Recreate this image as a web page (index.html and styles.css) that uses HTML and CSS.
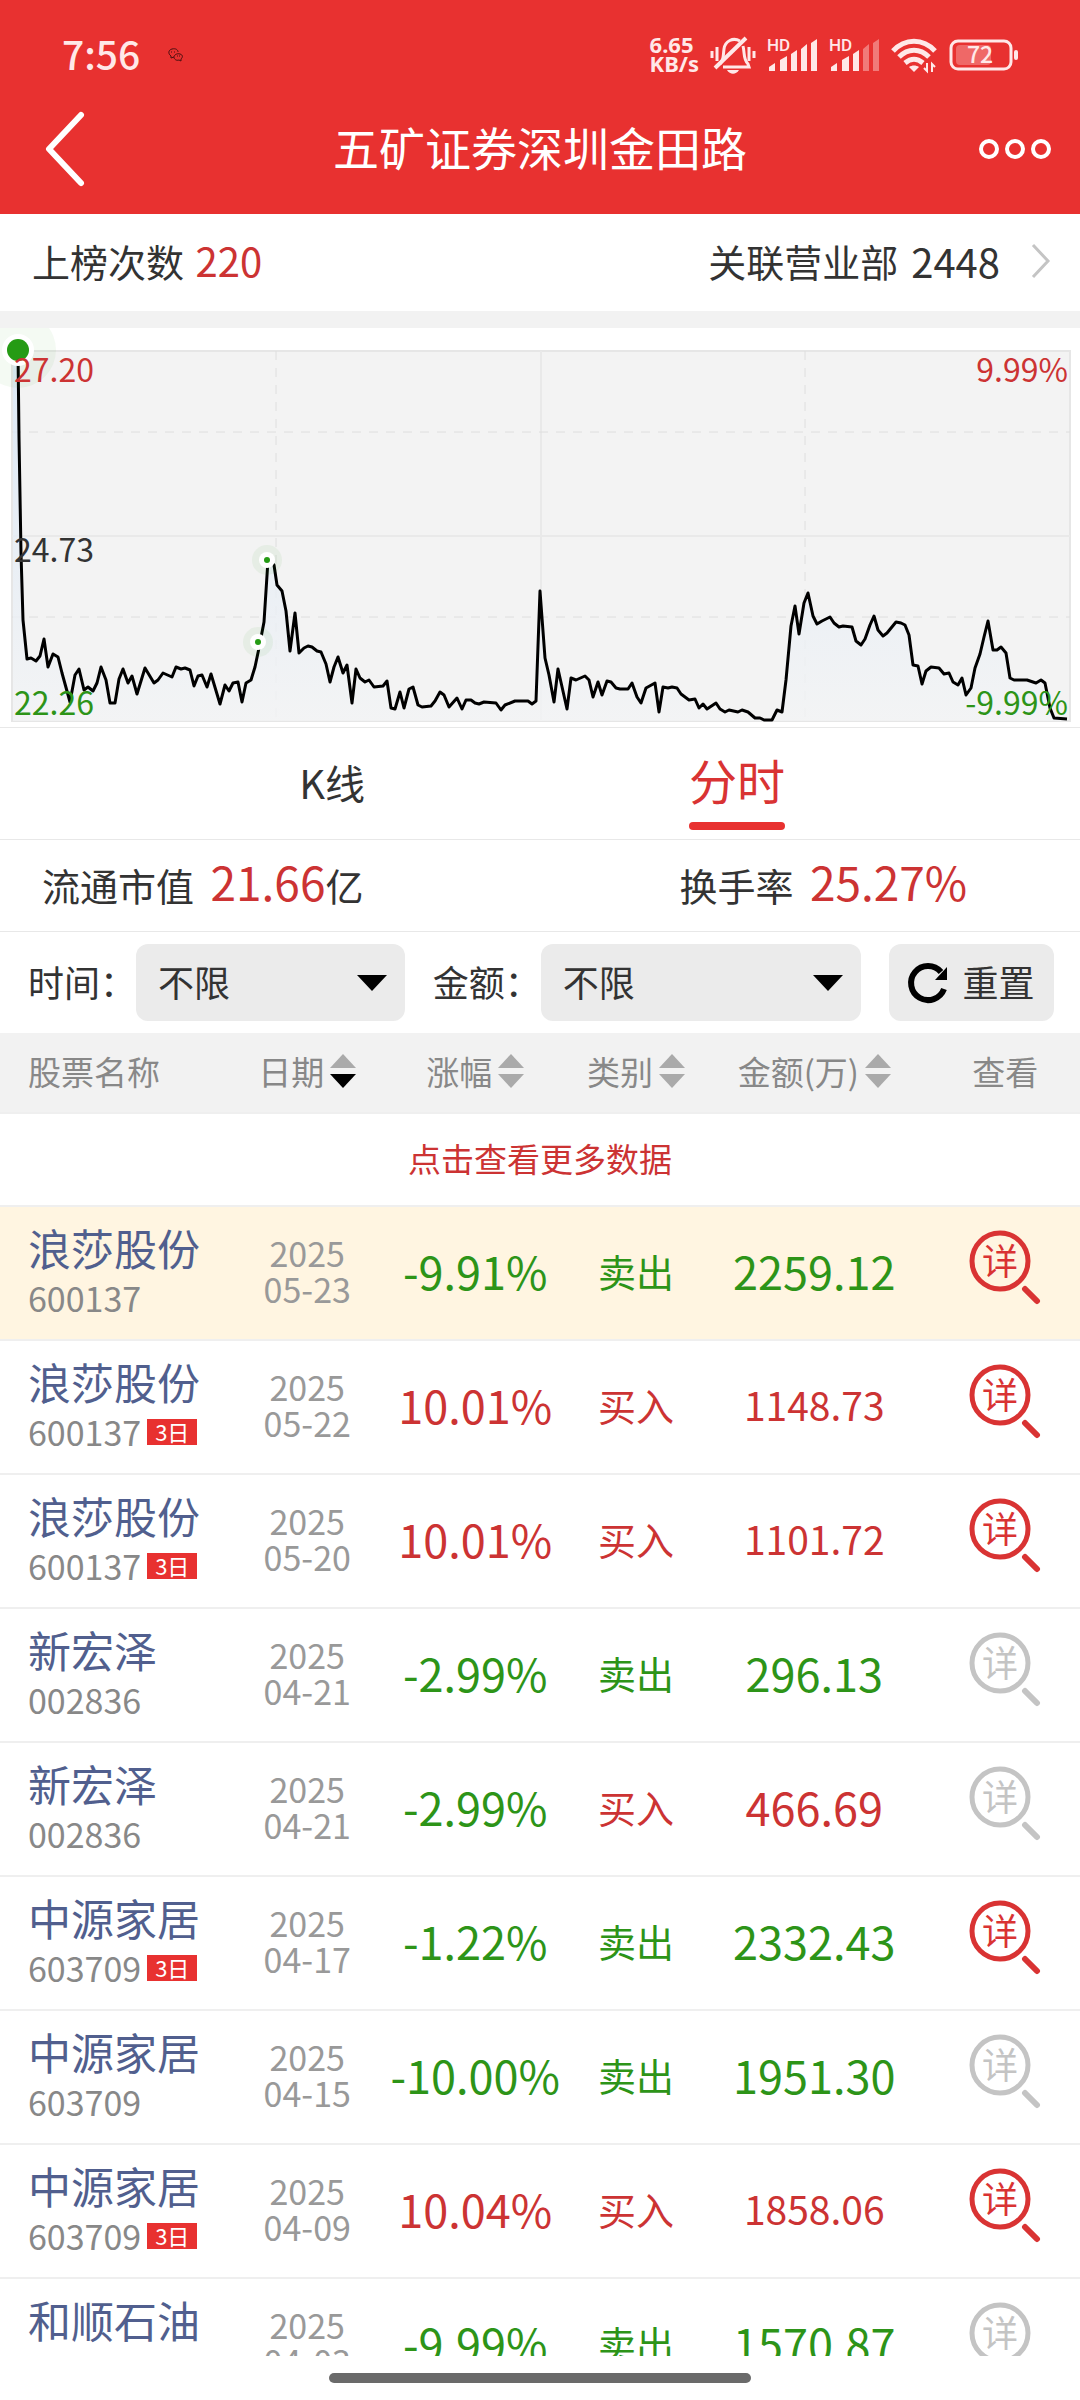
FILE: index.html
```html
<!DOCTYPE html>
<html lang="zh-CN">

<head>
    <meta charset="UTF-8">
    <meta name="viewport" content="width=device-width, initial-scale=1.0">
    <title>五矿证券深圳金田路</title>
    <link rel="stylesheet" href="styles.css">
</head>

<body>
    <!-- shared icons -->
    <svg class="defs" width="0" height="0">
        <symbol id="detail" viewBox="0 0 72 80">
            <circle cx="31" cy="31" r="28" fill="none" stroke="currentColor" stroke-width="5" />
            <path d="M56 59l12 12" stroke="currentColor" stroke-width="6" stroke-linecap="round" />
            <text x="31" y="45" font-size="36" text-anchor="middle" fill="currentColor">详</text>
        </symbol>
        <symbol id="sort" viewBox="0 0 26 36">
            <path class="up" d="M13 1l13 14H0z" />
            <path class="down" d="M13 35L0 21h26z" />
        </symbol>
    </svg>

    <div class="page">
        <header class="header">
            <div class="status">
                <span class="clock">7:56</span>
                <svg class="wechat" width="15" height="14" viewBox="0 0 15 14" fill="none" stroke="#4a1010">
                    <path d="M6 9l-3 1V8C0 6 0 2 4 1s6 1 6 3" />
                    <path d="M13 11v2l-2-1c-3 1-5-1-5-3s3-4 6-3 3 3 1 5z" />
                    <path d="M3 4h1M6 4h1M9 8h1M11 8h1" />
                </svg>
                <div class="status-right">
                    <div class="speed"><span>6.65</span><span>KB/s</span></div>
                    <svg width="44" height="38" viewBox="0 0 44 38" fill="none" stroke="currentColor" stroke-width="3">
                        <path d="M9 28c4-4 3-8 4-15 1-8 9-12 16-8M32 10c2 8 0 13 5 18l1 3H12" />
                        <path d="M4 32L35 2" stroke-width="4" />
                        <path d="M1 15v7M6 11v14M38 11v14M43 15v7" stroke-width="3" />
                        <path d="M16 34h12c-3 5-9 5-12 0z" fill="currentColor" stroke="none" />
                    </svg>
                    <svg width="50" height="34" viewBox="0 0 50 34" fill="currentColor">
                        <text class="hd" x="0" y="13">HD</text>
                        <path d="M2 33v-4l6-4v8zM13 33V22l7-4v15zM24 33V16l6-4v21zM34 33V11l6-5v27zM44 33V5l6-4v32z" />
                    </svg>
                    <svg width="50" height="34" viewBox="0 0 50 34" fill="currentColor">
                        <text class="hd" x="0" y="13">HD</text>
                        <path d="M2 33v-4l6-4v8zM13 33V22l7-4v15zM24 33V16l6-4v21z" />
                        <path d="M34 33V11l6-5v27zM44 33V5l6-4v32z" opacity=".4" />
                    </svg>
                    <svg width="46" height="36" viewBox="0 0 46 36" fill="none" stroke="currentColor" stroke-width="5">
                        <path d="M2 14c12-13 30-13 42 0M8 20c9-9 21-9 30 0M14 26c6-5 12-5 18 0" />
                        <path d="M18 30c3-2 7-2 10 0l-5 5z" fill="currentColor" stroke="none" />
                        <path d="M36 26v8l-3-3M41 35v-8l3 3" stroke-width="2" />
                    </svg>
                    <svg width="69" height="32" viewBox="0 0 69 32">
                        <rect x="2" y="2" width="60" height="28" rx="7" fill="none" stroke="currentColor" stroke-width="3" />
                        <rect x="7" y="6" width="35" height="20" rx="4" fill="currentColor" opacity=".3" />
                        <rect x="65" y="11" width="4" height="10" rx="2" fill="currentColor" />
                        <text class="level" x="31" y="24" text-anchor="middle" fill="currentColor">72</text>
                    </svg>
                </div>
            </div>
            <nav class="navbar">
                <button class="icon-btn back" aria-label="返回">
                    <svg width="40" height="76" viewBox="0 0 40 76" fill="none" stroke="currentColor" stroke-width="6" stroke-linecap="round" stroke-linejoin="round">
                        <path d="M36 4L4 38l32 34" />
                    </svg>
                </button>
                <h1>五矿证券深圳金田路</h1>
                <button class="icon-btn" aria-label="更多">
                    <svg width="74" height="22" viewBox="0 0 74 22" fill="none" stroke="currentColor" stroke-width="4">
                        <circle cx="11" cy="11" r="8" />
                        <circle cx="37" cy="11" r="8" />
                        <circle cx="63" cy="11" r="8" />
                    </svg>
                </button>
            </nav>
        </header>

        <div class="summary">
            <span>上榜次数 <span class="num red">220</span></span>
            <a href="#related">
                关联营业部 <span class="num">2448</span>
                <svg class="arrow" width="18" height="34" viewBox="0 0 18 34" fill="none" stroke="#c4c4c4" stroke-width="3">
                    <path d="M1 1l15 16L1 33" />
                </svg>
            </a>
        </div>

        <svg class="chart" viewBox="0 0 1080 399">
            <defs>
                <linearGradient id="fill" x1="0" y1="0" x2="0" y2="1">
                    <stop offset="0" stop-color="#d8e6f6" />
                    <stop offset="1" stop-color="#f3f4f5" />
                </linearGradient>
            </defs>
            <rect x="12" y="23" width="1058" height="370" fill="#f3f3f3" stroke="#e6e6e6" stroke-width="2" />
            <path class="grid" d="M12 208h1058M541 23v370" />
            <path class="grid dashed" d="M12 104h1058M12 289h1058M276 23v370M805 23v370" />
            <g id="series"></g>
            <circle cx="18" cy="22" r="38" fill="#259b14" opacity=".05" />
            <g fill="#259b14" opacity=".06">
                <circle cx="267" cy="232" r="15" />
                <circle cx="258" cy="314" r="15" />
            </g>
            <g fill="#fff">
                <circle cx="18" cy="22" r="16" />
                <circle cx="267" cy="232" r="8" />
                <circle cx="258" cy="314" r="8" />
            </g>
            <g fill="#259b14">
                <circle cx="18" cy="22" r="11" />
                <circle cx="267" cy="232" r="3" />
                <circle cx="258" cy="314" r="3" />
            </g>
            <g class="axis">
                <text class="red" x="14" y="54">27.20</text>
                <text x="14" y="234">24.73</text>
                <text class="green" x="14" y="387">22.26</text>
                <text class="red" x="1068" y="54" text-anchor="end">9.99%</text>
                <text class="green" x="1068" y="387" text-anchor="end">-9.99%</text>
            </g>
        </svg>

        <div class="tabs" role="tablist">
            <button role="tab" aria-selected="false">K线</button>
            <button role="tab" aria-selected="true" class="active"><span>分时</span></button>
        </div>

        <div class="stats">
            <span>流通市值 <span class="big red">21.66</span>亿</span>
            <span>换手率 <span class="big red">25.27%</span></span>
        </div>

        <div class="filters">
            <label for="time">时间：</label>
            <div class="select time">
                <select id="time">
                    <option>不限</option>
                </select>
            </div>
            <label class="second" for="amount">金额：</label>
            <div class="select amount">
                <select id="amount">
                    <option>不限</option>
                </select>
            </div>
            <button class="reset">
                <svg width="40" height="42" viewBox="0 0 40 42">
                    <path d="M36 27a17 17 0 1 1-3-17" fill="none" stroke="#000" stroke-width="6" />
                    <path d="M39 5v13H27z" />
                </svg>
                <span>重置</span>
            </button>
        </div>

        <main class="list">
            <table>
                <colgroup>
                    <col class="c-name">
                    <col class="c-date">
                    <col class="c-pct">
                    <col class="c-type">
                    <col class="c-amount">
                    <col class="c-view">
                </colgroup>
                <thead>
                    <tr>
                        <th class="name">股票名称</th>
                        <th><button class="desc">日期<svg><use href="#sort" /></svg></button></th>
                        <th><button>涨幅<svg><use href="#sort" /></svg></button></th>
                        <th><button>类别<svg><use href="#sort" /></svg></button></th>
                        <th><button>金额(万)<svg><use href="#sort" /></svg></button></th>
                        <th>查看</th>
                    </tr>
                </thead>
                <tbody>
                    <tr class="more">
                        <td colspan="6"><button>点击查看更多数据</button></td>
                    </tr>
                    <tr class="current green">
                        <td class="name"><a href="#600137">浪莎股份</a><div class="code">600137</div></td>
                        <td class="date">2025<br>05-23</td>
                        <td class="pct">-9.91%</td>
                        <td class="type">卖出</td>
                        <td class="amt">2259.12</td>
                        <td><button class="view on" aria-label="查看"><svg><use href="#detail" /></svg></button></td>
                    </tr>
                    <tr class="red">
                        <td class="name"><a href="#600137">浪莎股份</a><div class="code">600137<span class="tag">3日</span></div></td>
                        <td class="date">2025<br>05-22</td>
                        <td class="pct">10.01%</td>
                        <td class="type">买入</td>
                        <td class="amt small">1148.73</td>
                        <td><button class="view on" aria-label="查看"><svg><use href="#detail" /></svg></button></td>
                    </tr>
                    <tr class="red">
                        <td class="name"><a href="#600137">浪莎股份</a><div class="code">600137<span class="tag">3日</span></div></td>
                        <td class="date">2025<br>05-20</td>
                        <td class="pct">10.01%</td>
                        <td class="type">买入</td>
                        <td class="amt small">1101.72</td>
                        <td><button class="view on" aria-label="查看"><svg><use href="#detail" /></svg></button></td>
                    </tr>
                    <tr class="green">
                        <td class="name"><a href="#002836">新宏泽</a><div class="code">002836</div></td>
                        <td class="date">2025<br>04-21</td>
                        <td class="pct">-2.99%</td>
                        <td class="type">卖出</td>
                        <td class="amt">296.13</td>
                        <td><button class="view" aria-label="查看"><svg><use href="#detail" /></svg></button></td>
                    </tr>
                    <tr class="red">
                        <td class="name"><a href="#002836">新宏泽</a><div class="code">002836</div></td>
                        <td class="date">2025<br>04-21</td>
                        <td class="pct green">-2.99%</td>
                        <td class="type">买入</td>
                        <td class="amt">466.69</td>
                        <td><button class="view" aria-label="查看"><svg><use href="#detail" /></svg></button></td>
                    </tr>
                    <tr class="green">
                        <td class="name"><a href="#603709">中源家居</a><div class="code">603709<span class="tag">3日</span></div></td>
                        <td class="date">2025<br>04-17</td>
                        <td class="pct">-1.22%</td>
                        <td class="type">卖出</td>
                        <td class="amt">2332.43</td>
                        <td><button class="view on" aria-label="查看"><svg><use href="#detail" /></svg></button></td>
                    </tr>
                    <tr class="green">
                        <td class="name"><a href="#603709">中源家居</a><div class="code">603709</div></td>
                        <td class="date">2025<br>04-15</td>
                        <td class="pct">-10.00%</td>
                        <td class="type">卖出</td>
                        <td class="amt">1951.30</td>
                        <td><button class="view" aria-label="查看"><svg><use href="#detail" /></svg></button></td>
                    </tr>
                    <tr class="red">
                        <td class="name"><a href="#603709">中源家居</a><div class="code">603709<span class="tag">3日</span></div></td>
                        <td class="date">2025<br>04-09</td>
                        <td class="pct">10.04%</td>
                        <td class="type">买入</td>
                        <td class="amt small">1858.06</td>
                        <td><button class="view on" aria-label="查看"><svg><use href="#detail" /></svg></button></td>
                    </tr>
                    <tr class="green">
                        <td class="name"><a href="#603353">和顺石油</a></td>
                        <td class="date">2025<br>04-03</td>
                        <td class="pct">-9.99%</td>
                        <td class="type">卖出</td>
                        <td class="amt">1570.87</td>
                        <td><button class="view" aria-label="查看"><svg><use href="#detail" /></svg></button></td>
                    </tr>
                </tbody>
            </table>
        </main>

        <div class="home"><span></span></div>
    </div>

    <script src="chart.js"></script>
</body>

</html>
```
FILE: chart.js
```js
// x,y pairs of the intraday price line
const points = `18,23 19,109 21,225 23,292 27,331 31,330 36,333 40,328 44,311 48,339 53,326 58,329 62,345 70,374
75,347 79,341 84,362 88,359 93,363 97,355 101,339 106,352 110,375 115,375 119,351 123,341 128,355 132,348 137,366
145,340 154,355 158,352 163,345 172,349 176,339 181,341 185,340 190,342 194,358 198,348 202,347 207,359 211,346
220,376 225,357 229,363 233,355 238,354 242,374 246,355 251,352 255,339 259,320 264,294 268,232 274,237 277,257
282,263 286,283 290,323 295,285 299,325 304,320 308,318 312,319 317,323 321,324 326,336 330,354 334,339 338,329
343,345 347,337 352,375 356,341 360,350 365,354 369,352 374,359 383,358 387,353 391,380 395,381 400,364 404,380
409,361 413,359 418,377 422,379 431,378 435,373 440,364 444,367 449,379 457,370 462,381 466,372 471,372 475,375
479,376 484,374 496,375 501,382 505,377 515,373 528,373 532,376 536,373 540,263 545,330 549,347 554,374 558,341
567,381 571,350 576,352 585,348 589,352 593,369 598,354 602,367 607,353 611,354 616,360 620,361 628,361 632,355
637,369 641,375 646,360 655,355 659,384 663,359 668,360 672,359 677,360 681,366 689,372 695,371 699,380 703,376
707,381 716,375 720,381 725,384 729,382 738,384 742,382 748,384 755,390 760,390 764,392 772,392 777,382 782,384
786,352 791,298 795,278 799,306 804,275 808,265 813,288 817,296 822,293 830,289 834,295 839,299 843,298 852,299
856,313 861,317 865,311 870,297 874,288 878,302 883,308 887,305 896,294 901,295 905,297 909,307 913,337 918,338
922,356 926,343 931,339 939,340 944,346 949,345 953,354 958,357 962,350 966,367 971,360 975,340 980,326 984,309
988,293 993,322 997,322 1001,319 1006,325 1010,350 1014,352 1027,352 1036,355 1041,352 1045,355 1050,380 1054,390
1067,391`;

document.getElementById('series').innerHTML = `
    <polygon points="13,23 ${points} 1067,393 13,393" fill="url(#fill)" opacity=".8" />
    <polyline points="${points}" fill="none" stroke="#000" stroke-width="3" stroke-linejoin="round" />`;
```
FILE: styles.css
```css
* {
    box-sizing: border-box;
}

body {
    margin: 0;
    font-family: "Noto Sans CJK SC", "Noto Sans", sans-serif;
    font-size: 38px;
    color: #333;
    background-color: #fff;
}

button,
select {
    font: inherit;
    color: inherit;
    border: none;
    padding: 0;
    background: none;
    cursor: pointer;
}

a {
    color: inherit;
    text-decoration: none;
}

svg {
    display: block;
    overflow: visible;
}

.defs {
    position: absolute;
}

.red {
    color: #cc3333;
    fill: #cc3333;
}

.green {
    color: #2d9418;
    fill: #2d9418;
}

.page {
    display: flex;
    flex-direction: column;
    height: 100vh;
    overflow: hidden;
}

.page > * {
    flex-shrink: 0;
}

/* header */
.header {
    background-color: #e83130;
    color: #fff;
}

.status {
    display: flex;
    align-items: center;
    height: 84px;
    padding: 26px 62px 0;
    color: #ffe8e8;
}

.clock {
    padding-bottom: 4px;
    font-size: 39px;
    font-weight: 500;
    line-height: 40px;
}

.wechat {
    margin-left: 28px;
}

.status-right {
    display: flex;
    align-items: center;
    gap: 12px;
    margin-left: auto;
}

.speed {
    display: flex;
    flex-direction: column;
    padding-bottom: 2px;
    font-family: "Noto Sans", sans-serif;
    font-size: 22px;
    font-weight: bold;
    line-height: 19px;
}

.hd {
    font-family: Roboto, sans-serif;
    font-size: 17px;
    font-weight: 500;
}

.level {
    font-size: 23px;
    font-weight: 500;
}

.navbar {
    display: grid;
    grid-template-columns: 1fr auto 1fr;
    align-items: center;
    height: 130px;
    padding: 0 28px;
}

.icon-btn {
    justify-self: end;
}

.back {
    justify-self: start;
    padding-left: 17px;
}

h1 {
    margin: 0;
    padding-bottom: 6px;
    font-size: 46px;
    font-weight: normal;
    line-height: 60px;
}

/* summary */
.summary {
    display: flex;
    justify-content: space-between;
    align-items: center;
    height: 114px;
    padding: 0 30px 4px 32px;
    border-bottom: 17px solid #f2f2f2;
    line-height: 48px;
}

.summary a {
    display: flex;
    align-items: center;
    gap: 10px;
}

.num {
    margin-left: 3px;
    font-size: 40px;
}

.arrow {
    margin-left: 22px;
}

/* chart */
.chart {
    width: 100%;
    overflow: hidden;
}

.grid {
    fill: none;
    stroke: #e9e9e9;
    stroke-width: 2;
}

.dashed {
    stroke-width: 1;
    stroke: #dedede;
    stroke-dasharray: 9 8;
}

.axis {
    font-size: 32px;
    fill: #333;
}

/* tabs */
.tabs {
    display: flex;
    height: 113px;
    padding: 0 13% 0 12%;
    border-top: 1px solid #e8e8e8;
    border-bottom: 1px solid #e8e8e8;
}

.tabs button {
    flex: 1;
    padding-bottom: 4px;
    font-size: 40px;
}

.tabs .active {
    padding: 0;
    font-size: 48px;
    color: #d93333;
}

.tabs span {
    display: inline-flex;
    flex-direction: column;
    justify-content: space-between;
    height: 93px;
    padding-top: 10px;
    line-height: 64px;
}

.tabs span::after {
    content: "";
    height: 8px;
    border-radius: 4px;
    background-color: #e83130;
}

/* stats */
.stats {
    display: grid;
    grid-template-columns: 64% 1fr;
    align-items: center;
    height: 92px;
    padding: 0 42px 6px;
    border-bottom: 1px solid #e8e8e8;
    line-height: 60px;
    white-space: nowrap;
}

.big {
    margin-left: 8px;
    font-size: 46px;
}

/* filters */
.filters {
    display: flex;
    align-items: center;
    height: 101px;
    padding: 0 26px 0 28px;
    font-size: 36px;
}

.filters label,
.reset span {
    padding-bottom: 4px;
}

.filters .second {
    margin-left: 28px;
}

.select {
    position: relative;
}

.select::after {
    content: "";
    position: absolute;
    right: 18px;
    top: 31px;
    border: 15px solid transparent;
    border-top: 16px solid #000;
    border-bottom: none;
    pointer-events: none;
}

.time {
    flex: 270;
}

.amount {
    flex: 322;
}

select {
    width: 100%;
    height: 77px;
    padding: 0 22px 4px;
    border-radius: 12px;
    background-color: #ebebeb;
    appearance: none;
}

.reset {
    display: flex;
    align-items: center;
    justify-content: center;
    gap: 14px;
    width: 165px;
    height: 77px;
    margin-left: 28px;
    border-radius: 12px;
    background-color: #ebebeb;
}

/* table */
.page .list {
    flex: 1;
    min-height: 0;
    overflow: hidden;
}

table {
    width: 100%;
    table-layout: fixed;
    border-spacing: 0;
}

.c-name {
    width: 21.3%;
}

.c-date {
    width: 14.3%;
}

.c-pct {
    width: 16.8%;
}

.c-type {
    width: 13%;
}

.c-amount {
    width: 20%;
}

.c-view {
    width: 14.6%;
}

th,
td {
    padding: 0 0 6px;
    text-align: center;
    border-bottom: 2px solid #efefef;
}

th {
    height: 81px;
    padding-bottom: 4px;
    font-size: 33px;
    font-weight: normal;
    color: #888;
    background-color: #f2f2f2;
    white-space: nowrap;
}

th:last-child,
td:nth-child(6) {
    padding-left: 8px;
}

th button {
    display: inline-flex;
    align-items: center;
    gap: 6px;
}

th svg {
    width: 26px;
    height: 36px;
    fill: #aaa;
}

.desc svg {
    --down: #000;
}

.down {
    fill: var(--down, #aaa);
}

td {
    height: 134px;
}

.name {
    padding-left: 28px;
    text-align: left;
}

td.name {
    vertical-align: top;
    padding-top: 13px;
}

.name a {
    display: block;
    font-size: 43px;
    line-height: 55px;
    color: #515f8e;
}

.code {
    display: flex;
    align-items: center;
    gap: 6px;
    font-size: 34px;
    line-height: 46px;
    color: #888;
}

.tag {
    width: 50px;
    height: 26px;
    font-size: 22px;
    line-height: 24px;
    text-align: center;
    color: #fff;
    background-color: #e83130;
}

.more td {
    height: 93px;
    padding-bottom: 4px;
    font-size: 33px;
    color: #cc3333;
}

.current {
    background-color: #fff5e1;
}

.date {
    padding-bottom: 4px;
    font-size: 34px;
    line-height: 36px;
    color: #999;
}

.pct,
.amt {
    font-size: 45px;
    white-space: nowrap;
}

.amt.small {
    font-size: 39px;
}

.view {
    display: block;
    margin: 0 auto;
    color: #c4c4c4;
    fill: currentColor;
}

.view svg {
    width: 72px;
    height: 80px;
}

.view.on {
    color: #d93333;
}

/* bottom bar */
.home {
    height: 44px;
    padding-top: 17px;
}

.home span {
    display: block;
    width: 39%;
    height: 10px;
    margin: 0 auto;
    border-radius: 5px;
    background-color: #6a6a6a;
}
```
